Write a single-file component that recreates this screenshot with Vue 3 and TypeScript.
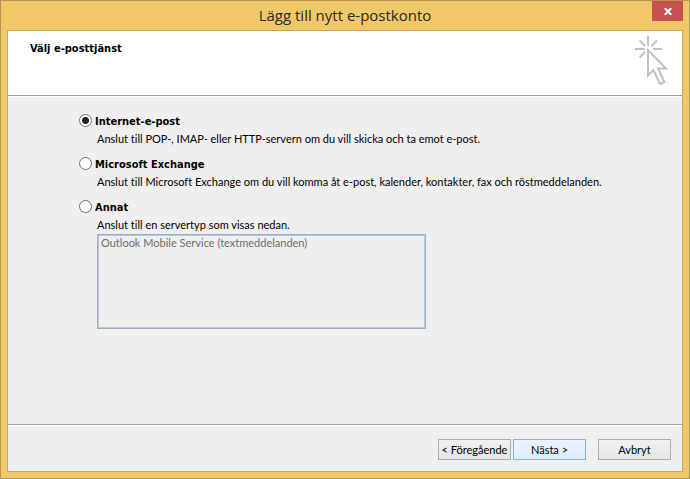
<script setup lang="ts">
import { ref } from 'vue'

interface ServiceOption {
  id: string
  title: string
  description: string
}

const options: ServiceOption[] = [
  {
    id: 'internet',
    title: 'Internet-e-post',
    description: 'Anslut till POP-, IMAP- eller HTTP-servern om du vill skicka och ta emot e-post.',
  },
  {
    id: 'exchange',
    title: 'Microsoft Exchange',
    description:
      'Anslut till Microsoft Exchange om du vill komma åt e-post, kalender, kontakter, fax och röstmeddelanden.',
  },
  {
    id: 'other',
    title: 'Annat',
    description: 'Anslut till en servertyp som visas nedan.',
  },
]

const serverTypes: string[] = ['Outlook Mobile Service (textmeddelanden)']
const selected = ref<string>('internet')
const serverType = ref<string>('')
</script>

<template>
  <main class="window">
    <header class="titlebar">
      <h1 class="title">Lägg till nytt e-postkonto</h1>
      <button class="close" type="button" aria-label="Stäng">
        <svg width="8" height="7" viewBox="0 0 8 7" aria-hidden="true">
          <path d="M0.8 0L7.2 7M7.2 0L0.8 7" />
        </svg>
      </button>
    </header>

    <form class="client" @submit.prevent>
      <div class="banner">
        <h2 class="heading">Välj e-posttjänst</h2>
        <svg class="cursor" width="36" height="52" viewBox="0 0 36 52" aria-hidden="true">
          <path d="M14 1V11M1 14H11M19 14H28M5.5 5.5L11 11M23 5.5L17.5 11M5.5 22.5L11 17" />
          <path d="M14 15V40.5L19.5 35L26 49L30.5 47L24 33.5H32Z" />
        </svg>
      </div>

      <fieldset class="body">
        <div v-for="option in options" :key="option.id" class="option">
          <input
            :id="option.id"
            v-model="selected"
            class="radio"
            type="radio"
            name="service"
            :value="option.id"
            :aria-describedby="option.id + '-text'"
          />
          <label class="name" :for="option.id">{{ option.title }}</label>
          <p :id="option.id + '-text'" class="text">{{ option.description }}</p>
        </div>
        <select
          v-model="serverType"
          class="list"
          size="6"
          aria-labelledby="other-text"
          :disabled="selected !== 'other'"
        >
          <option v-for="type in serverTypes" :key="type" class="item" :value="type">
            {{ type }}
          </option>
        </select>
      </fieldset>

      <footer class="footer">
        <div class="pair">
          <button class="button" type="button">&lt; Föregående</button>
          <button class="button primary" type="submit">Nästa &gt;</button>
        </div>
        <button class="button" type="button">Avbryt</button>
      </footer>
    </form>
  </main>
</template>

<style>
body {
  margin: 0;
}
</style>

<style scoped>
.window {
  box-sizing: border-box;
  min-height: 100vh;
  display: flex;
  flex-direction: column;
  padding: 0 6px 6px;
  border: 1px solid #b5964e;
  background: #f0c869;
  color: #000;
  font-family: Lato, sans-serif;
  font-size: 11px;
  line-height: 14px;
  font-variant-ligatures: none;
}

.titlebar {
  display: grid;
  grid-template-columns: 31px 1fr 31px;
  height: 29px;
}

.title {
  grid-column: 2;
  margin: 0;
  text-align: center;
  font: 400 15px/29px 'Open Sans', sans-serif;
  color: #2b2920;
}

.close {
  height: 20px;
  display: flex;
  align-items: center;
  justify-content: center;
  padding: 0;
  border: 0;
  background: #c75050;
}

.close path {
  fill: none;
  stroke: #fff;
  stroke-width: 2;
}

.client {
  flex: 1;
  display: flex;
  flex-direction: column;
  border: 1px solid #cba656;
  background: #efefef;
}

.banner {
  display: flex;
  justify-content: space-between;
  height: 64px;
  padding: 0 12px 0 22px;
  border-bottom: 1px solid #a0a0a0;
  background: #fff;
}

.heading,
.name {
  font-family: 'DejaVu Sans Condensed', 'DejaVu Sans', sans-serif;
  font-size: 11px;
  font-weight: 700;
  line-height: 16px;
}

.heading {
  margin: 10px 0 0;
}

.cursor {
  margin-top: 4px;
}

.cursor path {
  fill: none;
  stroke: #c0c0c0;
  stroke-width: 2;
}

.body {
  flex: 1;
  min-width: 0;
  margin: 0;
  padding: 17px 71px 0;
  border: 0;
  border-top: 1px solid #fff;
}

.option {
  display: grid;
  grid-template-columns: 13px 1fr;
  column-gap: 3px;
  row-gap: 2px;
  margin-bottom: 11px;
}

.radio {
  appearance: none;
  box-sizing: border-box;
  width: 13px;
  height: 13px;
  margin: 0;
  border: 1px solid #707070;
  border-radius: 50%;
  background: #fff;
}

.radio:checked {
  background: radial-gradient(circle, #212121 3px, #fff 4px);
}

.text {
  grid-column: 2;
  margin: 0 0 0 2px;
  white-space: nowrap;
}

.list {
  display: block;
  box-sizing: border-box;
  width: 327px;
  max-width: 100%;
  height: 93px;
  margin: -8px 0 0 19px;
  padding: 0;
  overflow: hidden;
  border: 1px solid #a9cdf0;
  border-radius: 0;
  box-shadow: 0 0 0 1px #a4a9b3;
  background: #efefef;
  color: #6d6d6d;
  font: inherit;
  opacity: 1;
}

.item {
  min-height: 14px;
  padding: 0 2px;
  color: #6d6d6d;
}

.footer {
  display: flex;
  justify-content: flex-end;
  gap: 12px;
  padding: 14px 11px 11px;
  border-top: 1px solid #a0a0a0;
  box-shadow: inset 0 1px #fff;
}

.pair {
  display: flex;
  gap: 2px;
}

.button {
  box-sizing: border-box;
  width: 73px;
  height: 21px;
  padding: 0;
  border: 1px solid #acacac;
  background: linear-gradient(#f0f0f0, #e5e5e5);
  color: #000;
  font: inherit;
  white-space: nowrap;
}

.primary {
  border-color: #7eb4ea;
  background: linear-gradient(#ecf4fc, #dcecfc);
}
</style>
